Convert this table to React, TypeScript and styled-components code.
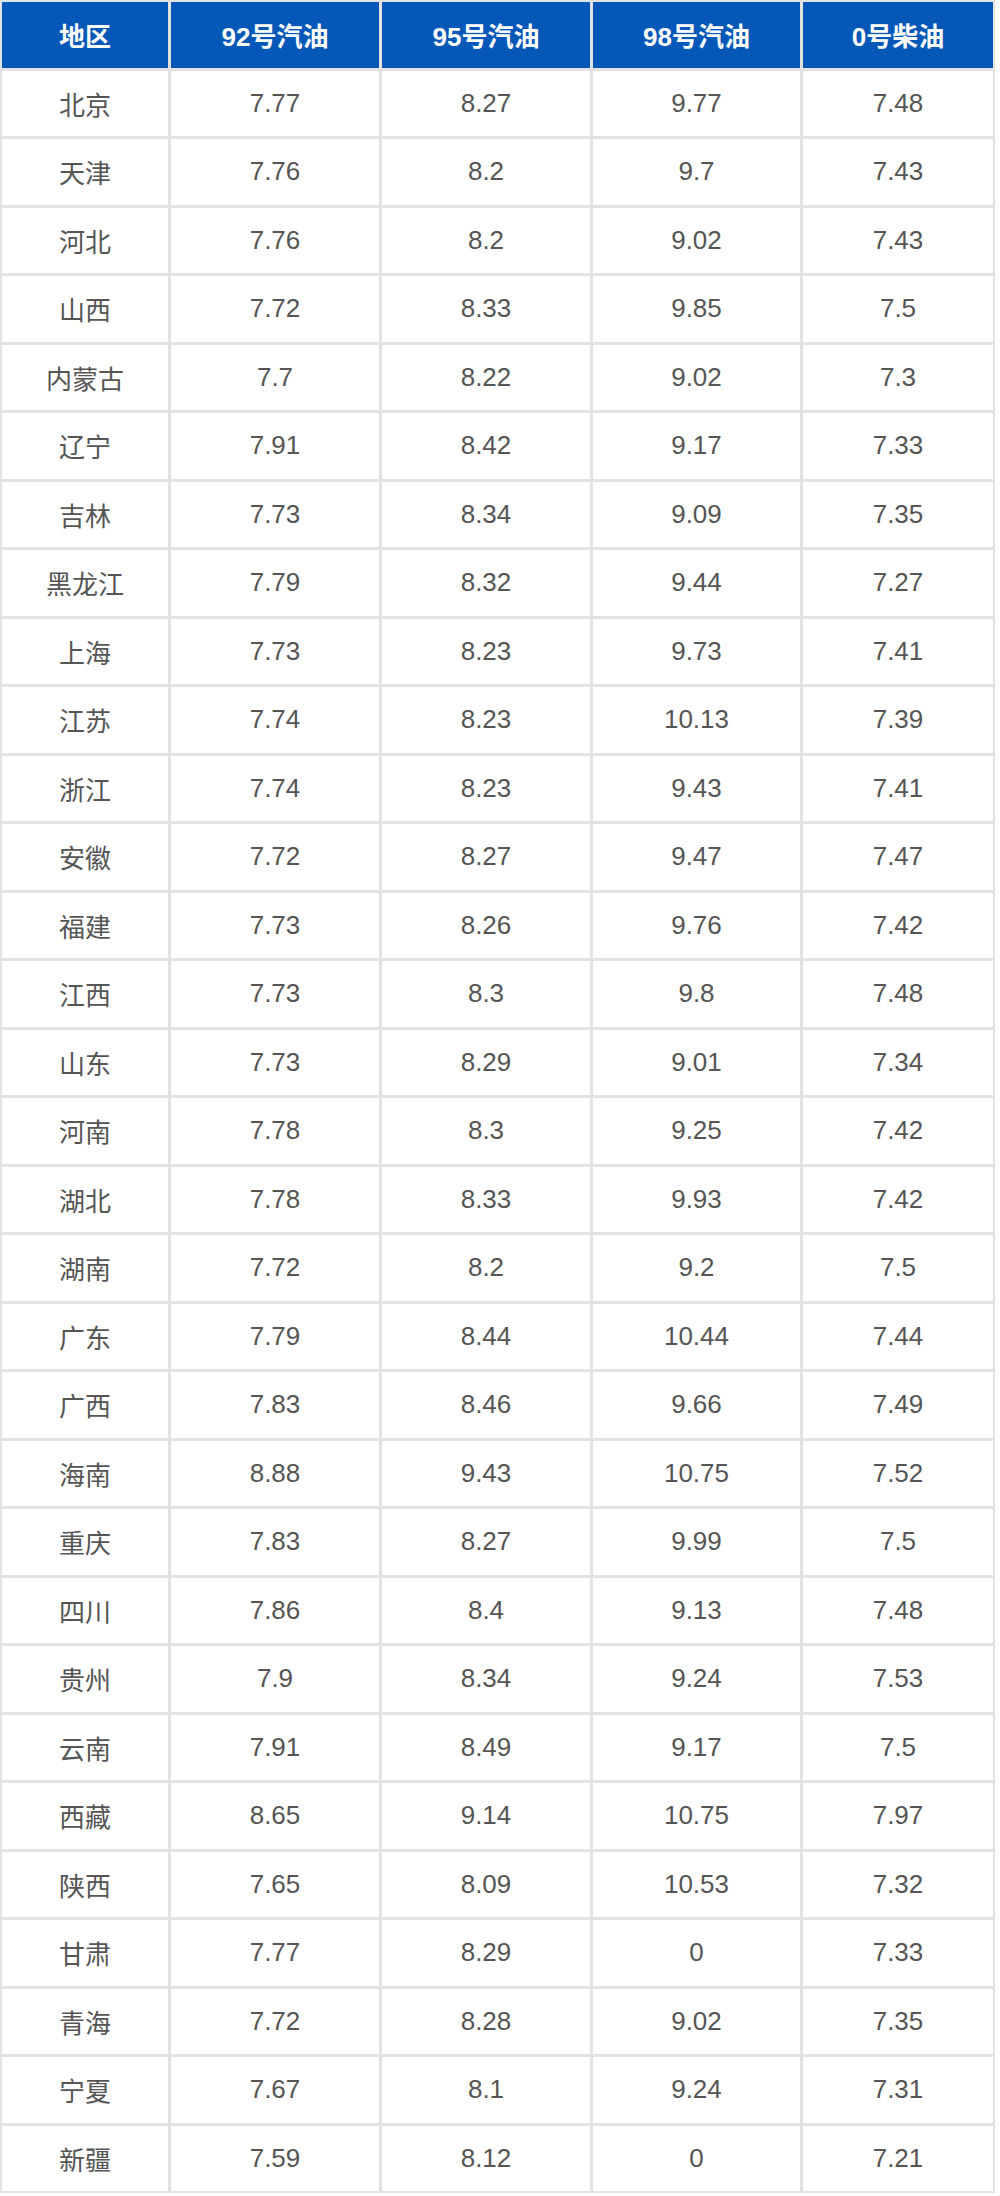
import styled, { createGlobalStyle } from "styled-components";

const GlobalStyle = createGlobalStyle`
  body {
    margin: 0;
    background: #fff;
  }
`;

const Table = styled.div`
  display: grid;
  grid-template-columns: 166px 208px 208px 207px 190px;
  grid-auto-rows: 65.5px;
  gap: 3px;
  padding: 2px;
  margin-left: 0;
  width: fit-content;
  background: #e2e2e2;
`;

const Cell = styled.div<{ head?: boolean }>`
  display: flex;
  align-items: center;
  justify-content: center;
  background: ${(p) => (p.head ? "#0558b7" : "#fff")};
  color: ${(p) => (p.head ? "#fff" : "#555")};
  font-family: "Liberation Sans", "Noto Sans CJK SC", sans-serif;
  font-size: 26px;
  font-weight: ${(p) => (p.head ? 700 : 400)};
`;

const headers = ["地区", "92号汽油", "95号汽油", "98号汽油", "0号柴油"];

const rows: string[][] = [
  ["北京", "7.77", "8.27", "9.77", "7.48"],
  ["天津", "7.76", "8.2", "9.7", "7.43"],
  ["河北", "7.76", "8.2", "9.02", "7.43"],
  ["山西", "7.72", "8.33", "9.85", "7.5"],
  ["内蒙古", "7.7", "8.22", "9.02", "7.3"],
  ["辽宁", "7.91", "8.42", "9.17", "7.33"],
  ["吉林", "7.73", "8.34", "9.09", "7.35"],
  ["黑龙江", "7.79", "8.32", "9.44", "7.27"],
  ["上海", "7.73", "8.23", "9.73", "7.41"],
  ["江苏", "7.74", "8.23", "10.13", "7.39"],
  ["浙江", "7.74", "8.23", "9.43", "7.41"],
  ["安徽", "7.72", "8.27", "9.47", "7.47"],
  ["福建", "7.73", "8.26", "9.76", "7.42"],
  ["江西", "7.73", "8.3", "9.8", "7.48"],
  ["山东", "7.73", "8.29", "9.01", "7.34"],
  ["河南", "7.78", "8.3", "9.25", "7.42"],
  ["湖北", "7.78", "8.33", "9.93", "7.42"],
  ["湖南", "7.72", "8.2", "9.2", "7.5"],
  ["广东", "7.79", "8.44", "10.44", "7.44"],
  ["广西", "7.83", "8.46", "9.66", "7.49"],
  ["海南", "8.88", "9.43", "10.75", "7.52"],
  ["重庆", "7.83", "8.27", "9.99", "7.5"],
  ["四川", "7.86", "8.4", "9.13", "7.48"],
  ["贵州", "7.9", "8.34", "9.24", "7.53"],
  ["云南", "7.91", "8.49", "9.17", "7.5"],
  ["西藏", "8.65", "9.14", "10.75", "7.97"],
  ["陕西", "7.65", "8.09", "10.53", "7.32"],
  ["甘肃", "7.77", "8.29", "0", "7.33"],
  ["青海", "7.72", "8.28", "9.02", "7.35"],
  ["宁夏", "7.67", "8.1", "9.24", "7.31"],
  ["新疆", "7.59", "8.12", "0", "7.21"],
];

export default function App() {
  return (
    <>
      <GlobalStyle />
      <Table>
        {headers.map((h) => (
          <Cell head key={h}>
            {h}
          </Cell>
        ))}
        {rows.map((r) =>
          r.map((v, i) => <Cell key={r[0] + i}>{v}</Cell>)
        )}
      </Table>
    </>
  );
}
